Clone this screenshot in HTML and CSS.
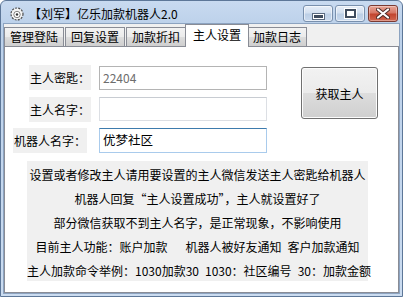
FILE: index.html
```html
<!DOCTYPE html>
<html lang="zh-CN">
<head>
<meta charset="utf-8">
<title>亿乐加款机器人2.0</title>
<link rel="stylesheet" href="styles.css">
</head>
<body>
<div class="window">
  <div class="titlebar">
    <svg class="app-icon" width="14" height="14" viewBox="0 0 14 14">
      <circle cx="7" cy="7" r="6" fill="#f4f4f4" stroke="#4a4a4a" stroke-width="1.2" stroke-dasharray="2 1.2"/>
      <circle cx="7" cy="7.5" r="3.2" fill="#fff" stroke="#666" stroke-width="0.8"/>
      <circle cx="7" cy="7.5" r="1.2" fill="#333"/>
    </svg>
    <span class="title">【刘军】亿乐加款机器人2.0</span>
    <div class="caption-btns">
      <div class="cbtn cbtn-blue"><span class="glyph-min"></span></div>
      <div class="cbtn cbtn-blue"><span class="glyph-max"></span></div>
      <div class="cbtn cbtn-close">
        <svg width="14" height="11" viewBox="0 0 14 11">
          <path d="M2 1.5 L12 9.5 M12 1.5 L2 9.5" stroke="#4a2a26" stroke-width="4" stroke-linecap="round"/>
          <path d="M2 1.5 L12 9.5 M12 1.5 L2 9.5" stroke="#ffffff" stroke-width="2.2" stroke-linecap="round"/>
        </svg>
      </div>
    </div>
  </div>
  <div class="client">
    <div class="tabs">
      <div class="tab">管理登陆</div>
      <div class="tab">回复设置</div>
      <div class="tab">加款折扣</div>
      <div class="tab tab-active">主人设置</div>
      <div class="tab">加款日志</div>
    </div>
    <div class="page">
      <div class="top">
        <div class="form">
          <span class="lbl">主人密匙：</span>
          <div class="input input-ro">22404</div>
          <span class="lbl">主人名字：</span>
          <div class="input input-plain"></div>
          <span class="lbl lbl-wide">机器人名字：</span>
          <div class="input input-focus">优梦社区</div>
        </div>
        <div class="btn">获取主人</div>
      </div>
      <div class="notes">
        <div class="line">设置或者修改主人请用要设置的主人微信发送主人密匙给机器人</div>
        <div class="line">机器人回复“主人设置成功”，主人就设置好了</div>
        <div class="line">部分微信获取不到主人名字，是正常现象，不影响使用</div>
        <div class="line">目前主人功能：账户加款<span class="gap-wide"></span>机器人被好友通知<span class="gap-narrow"></span>客户加款通知</div>
        <div class="line">主人加款命令举例：1030加款30<span class="gap-narrow"></span>1030：社区编号<span class="gap-narrow"></span>30：加款金额</div>
      </div>
    </div>
  </div>
</div>
</body>
</html>
```
FILE: styles.css
```css
* { box-sizing: border-box; }
html, body { margin: 0; padding: 0; }
body {
  width: 403px;
  height: 297px;
  overflow: hidden;
  font-family: "Noto Sans CJK SC", "Noto Sans", sans-serif;
  font-size: 12px;
  color: #000;
  background: #fff;
}
.window {
  width: 403px;
  height: 297px;
  display: flex;
  flex-direction: column;
  border: 1px solid #5d7798;
  border-radius: 6px 6px 0 0;
  background: linear-gradient(#c8daf0 0px, #bcd1ea 24px, #c4d7ee 60%, #cbdcf0 100%);
  padding: 0 3px 3px;
}
.titlebar {
  height: 23px;
  display: flex;
  align-items: center;
  flex-shrink: 0;
}
.app-icon { margin-left: 6px; margin-top: 2px; }
.title {
  margin-left: 5px;
  margin-top: 2px;
  font-size: 12px;
  line-height: 14px;
  color: #000;
}
.caption-btns {
  margin-left: auto;
  align-self: flex-start;
  margin-top: 4px;
  margin-right: 1px;
  display: flex;
  gap: 2px;
}
.cbtn {
  width: 30px;
  height: 17px;
  border-radius: 3px;
  display: flex;
  align-items: center;
  justify-content: center;
}
.cbtn-blue {
  border: 1px solid #7990ad;
  background: linear-gradient(#e7eef8 0%, #d3e0f0 45%, #bccfe6 55%, #c9d9ee 100%);
  box-shadow: inset 0 0 0 1px rgba(255,255,255,0.55);
}
.cbtn-close {
  margin-left: 1px;
  border: 1px solid #7b3b33;
  background: linear-gradient(#e8a597 0%, #d77866 45%, #c2452f 55%, #d1664f 100%);
  box-shadow: inset 0 0 0 1px rgba(255,255,255,0.35);
}
.glyph-min {
  width: 11px;
  height: 5px;
  margin-top: 5px;
  background: #3f4c5e;
  border: 1px solid #fff;
  box-shadow: 0 0 0 1px #5a6a80;
}
.glyph-max {
  width: 11px;
  height: 9px;
  border: 2px solid #3f4c5e;
  background: #fff;
  box-shadow: 0 0 0 1px #fff;
}
.client {
  flex: 1;
  display: flex;
  flex-direction: column;
  background: #f0f0f0;
  box-shadow: 0 0 0 1px #8ca3c0;
}
.tabs {
  display: flex;
  align-items: flex-end;
  height: 22px;
  position: relative;
  z-index: 1;
}
.tab {
  height: 19px;
  padding: 0 5px;
  margin-right: 1px;
  border: 1px solid #898c95;
  border-bottom: none;
  background: linear-gradient(#f3f3f3 0%, #ebebeb 50%, #dddddd 51%, #cfcfcf 100%);
  font-size: 12px;
  line-height: 18px;
  white-space: nowrap;
}
.tab-active {
  height: 23px;
  margin: 0 0 -1px -2px;
  padding: 0 7px;
  background: #fff;
  line-height: 20px;
  position: relative;
  z-index: 2;
}
.tab-active + .tab { margin-left: -2px; }
.page {
  flex: 1;
  background: #fff;
  border: 1px solid #898c95;
  display: flex;
  flex-direction: column;
}
.top {
  display: flex;
  align-items: flex-start;
  padding-top: 18px;
}
.form {
  display: grid;
  grid-template-columns: 86px 168px;
  column-gap: 8px;
  row-gap: 6.5px;
  align-items: center;
}
.lbl {
  justify-self: end;
  background: #f0f0f0;
  height: 25px;
  line-height: 25px;
  padding: 0 1px;
  white-space: nowrap;
}
.lbl-wide { margin-right: 4px; }
.input {
  height: 24px;
  line-height: 22px;
  padding: 0 3px;
  font-size: 12px;
  background: #fff;
  white-space: nowrap;
}
.input-ro {
  border: 1px solid #b4b4b4;
  color: #6d6d6d;
}
.input-plain {
  border: 1px solid #dcdfe4;
  border-top-color: #c8ccd2;
}
.input-focus {
  height: 25px;
  border: 1px solid #a9cbec;
  border-top-color: #3d7bad;
  color: #000;
  font-size: 12.5px;
}
.btn {
  margin-left: 34px;
  margin-top: 2px;
  width: 77px;
  height: 52px;
  border: 1px solid #707070;
  border-radius: 3px;
  background: linear-gradient(#f2f2f2 0%, #ebebeb 50%, #dddddd 51%, #cfcfcf 100%);
  box-shadow: inset 0 0 0 1px #fcfcfc;
  display: flex;
  align-items: center;
  justify-content: center;
  font-size: 12px;
}
.notes {
  margin: 8px 0 0 22px;
  width: 341px;
  height: 120px;
  padding-top: 2px;
  background: #f0f0f0;
  text-align: center;
}
.line {
  height: 24px;
  line-height: 24px;
  white-space: nowrap;
  font-size: 12px;
}
.gap-wide { display: inline-block; width: 18px; }
.gap-narrow { display: inline-block; width: 6px; }
```
